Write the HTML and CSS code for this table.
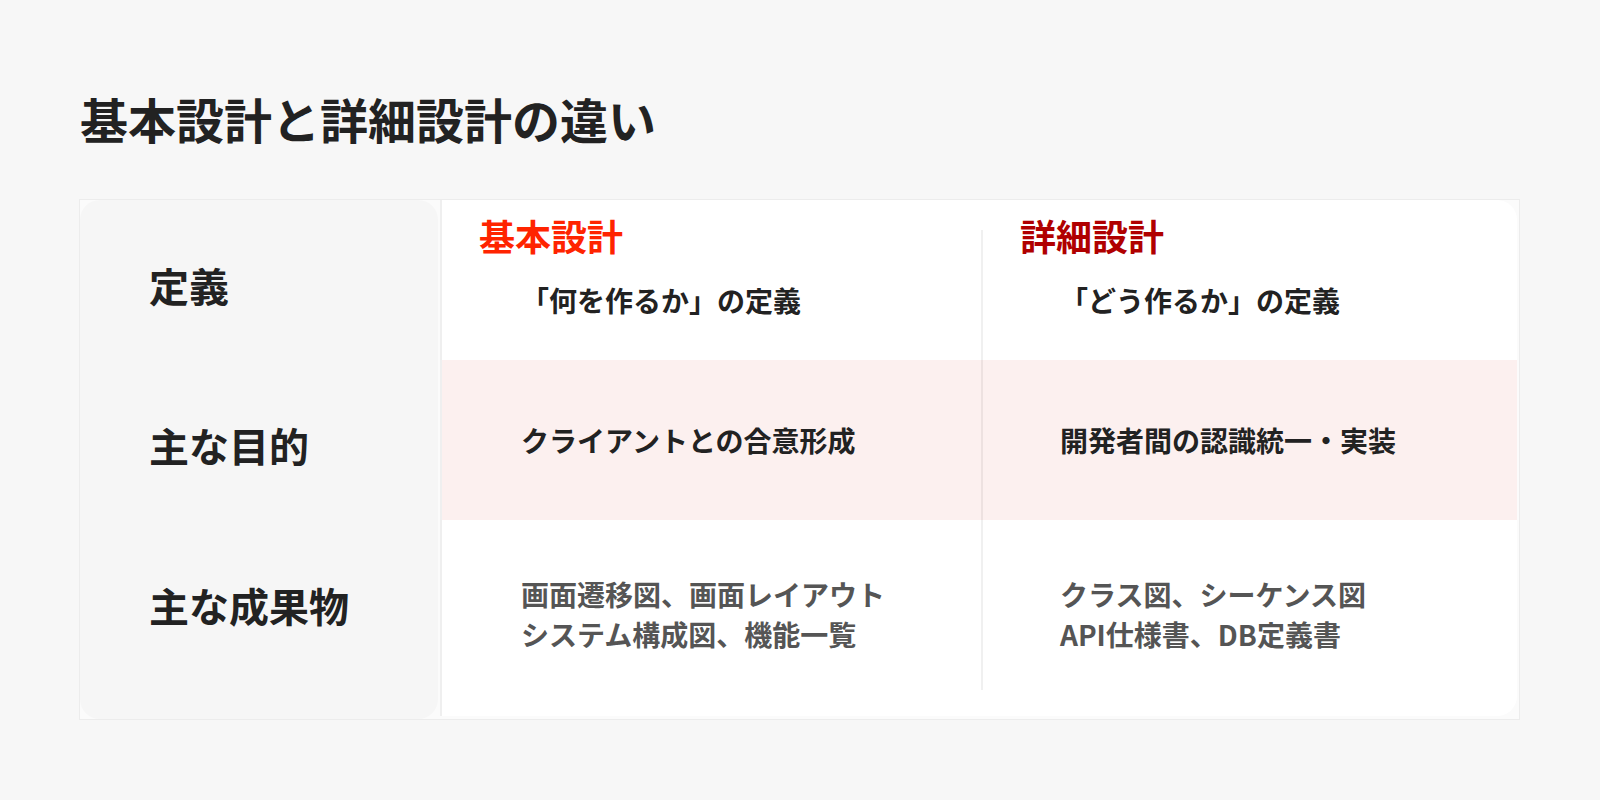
FILE: index.html
```html
<!DOCTYPE html>
<html lang="ja">
<head>
<meta charset="utf-8">
<title>基本設計と詳細設計の違い</title>
<link rel="stylesheet" href="styles.css">
</head>
<body>
<main class="page">
  <h1 class="title">基本設計と詳細設計の違い</h1>
  <section class="table">
    <div class="labels">
      <div class="label">定義</div>
      <div class="label">主な目的</div>
      <div class="label">主な成果物</div>
    </div>
    <div class="panel">
      <div class="divider"></div>
      <div class="row row-def">
        <div class="cell">
          <h2 class="col-head basic">基本設計</h2>
          <p class="text">「何を作るか」の定義</p>
        </div>
        <div class="cell">
          <h2 class="col-head detail">詳細設計</h2>
          <p class="text">「どう作るか」の定義</p>
        </div>
      </div>
      <div class="row row-purpose">
        <div class="cell"><p class="text">クライアントとの合意形成</p></div>
        <div class="cell"><p class="text">開発者間の認識統一・実装</p></div>
      </div>
      <div class="row row-output">
        <div class="cell"><p class="text muted">画面遷移図、画面レイアウト<br>システム構成図、機能一覧</p></div>
        <div class="cell"><p class="text muted">クラス図、シーケンス図<br>API仕様書、DB定義書</p></div>
      </div>
    </div>
  </section>
</main>
</body>
</html>
```

FILE: styles.css
```css
* { box-sizing: border-box; }
html, body { margin: 0; padding: 0; }
body {
  width: 1600px;
  height: 800px;
  background: #f7f7f7;
  font-family: "Noto Sans CJK JP", "Noto Sans", sans-serif;
  color: #222;
  overflow: hidden;
}
.page {
  padding: 90px 0 0 79px;
}
.title {
  margin: 0 0 51px 1px;
  font-size: 48px;
  line-height: 1.2;
  font-weight: 700;
  color: #222;
  height: 58px;
}
.table {
  width: 1441px;
  height: 521px;
  border: 1px solid #ececec;
  background: #fbfbfb;
  display: flex;
  gap: 2px;
}
.labels {
  width: 358px;
  background: #f6f6f6;
  border-radius: 20px;
  padding: 5px 0 0 69px;
  display: flex;
  flex-direction: column;
}
.label {
  height: 160px;
  display: flex;
  align-items: center;
  font-size: 40px;
  line-height: 1.2;
  font-weight: 700;
  color: #222;
}
.panel {
  flex: 1;
  position: relative;
  background: #fff;
  border-left: 2px solid #efefef;
  border-radius: 0 20px 20px 0;
  margin: 0 2px 3px 0;
  display: flex;
  flex-direction: column;
}
.divider {
  position: absolute;
  left: 539px;
  top: 30px;
  bottom: 26px;
  width: 2px;
  background: rgba(0, 0, 0, 0.06);
}
.row {
  display: grid;
  grid-template-columns: 539px 1fr;
}
.row-def { height: 160px; }
.row-purpose {
  height: 160px;
  background: #fcf0ef;
  align-items: center;
}
.row-output {
  flex: 1;
  padding-top: 54px;
}
.row-def .cell { padding-top: 14px; }
.cell {
  display: flex;
  flex-direction: column;
}
.col-head {
  margin: 0 0 23px 37px;
  font-size: 36px;
  line-height: 1.2;
  font-weight: 700;
}
.col-head.basic { color: #ff2400; }
.col-head.detail { color: #b00000; margin-left: 39px; }
.text {
  margin: 0 0 0 79px;
  font-size: 28px;
  line-height: 40px;
  font-weight: 700;
  color: #222;
}
.text.muted { color: #555; }
```
